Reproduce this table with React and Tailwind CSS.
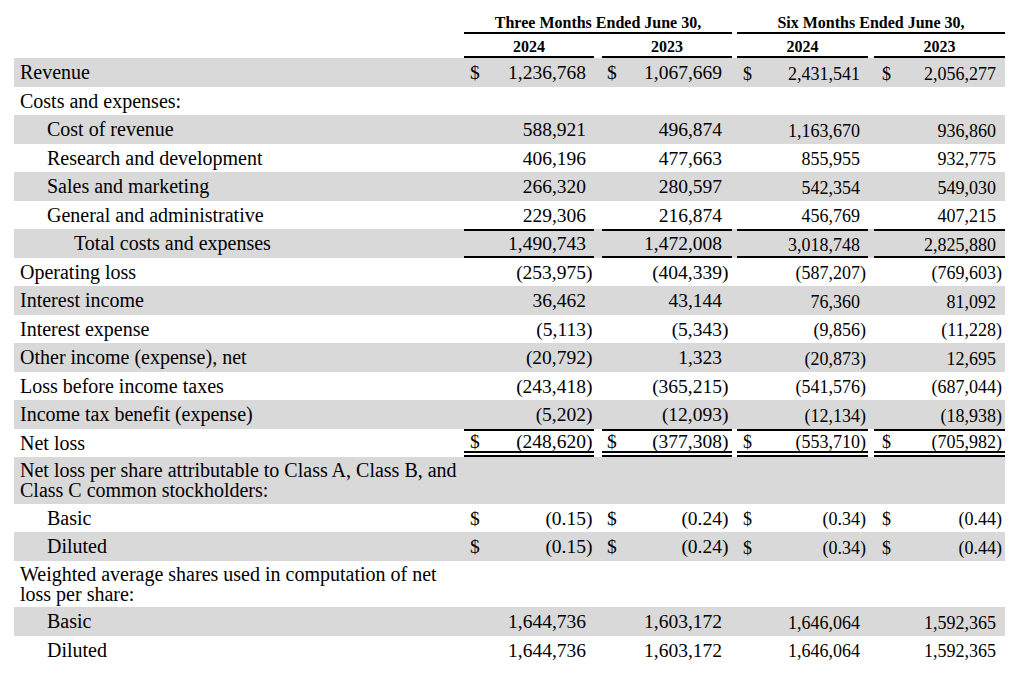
import React from "react";

const COLS = [
  { box: "w-[130px]", dollar: "pl-[6px]", end: "mr-[2px]", six: false },
  { box: "w-[130px] ml-[8px]", dollar: "pl-[5px]", end: "mr-[4px]", six: false },
  { box: "w-[131px] ml-[5px]", dollar: "pl-[6px]", end: "mr-[2px]", six: true },
  { box: "w-[131px] ml-[6px]", dollar: "pl-[8px]", end: "mr-[3px]", six: true },
];

const perShare = ["(0.15)", "(0.24)", "(0.34)", "(0.44)"];
const shares = ["1,644,736", "1,603,172", "1,646,064", "1,592,365"];

const rows = [
  { label: "Revenue", vals: ["1,236,768", "1,067,669", "2,431,541", "2,056,277"], dollar: true },
  { label: "Costs and expenses:" },
  { label: "Cost of revenue", indent: 1, vals: ["588,921", "496,874", "1,163,670", "936,860"] },
  { label: "Research and development", indent: 1, vals: ["406,196", "477,663", "855,955", "932,775"] },
  { label: "Sales and marketing", indent: 1, vals: ["266,320", "280,597", "542,354", "549,030"] },
  { label: "General and administrative", indent: 1, vals: ["229,306", "216,874", "456,769", "407,215"] },
  { label: "Total costs and expenses", indent: 2, vals: ["1,490,743", "1,472,008", "3,018,748", "2,825,880"], rule: "total" },
  { label: "Operating loss", vals: ["(253,975)", "(404,339)", "(587,207)", "(769,603)"] },
  { label: "Interest income", vals: ["36,462", "43,144", "76,360", "81,092"] },
  { label: "Interest expense", vals: ["(5,113)", "(5,343)", "(9,856)", "(11,228)"] },
  { label: "Other income (expense), net", vals: ["(20,792)", "1,323", "(20,873)", "12,695"] },
  { label: "Loss before income taxes", vals: ["(243,418)", "(365,215)", "(541,576)", "(687,044)"] },
  { label: "Income tax benefit (expense)", vals: ["(5,202)", "(12,093)", "(12,134)", "(18,938)"] },
  { label: "Net loss", vals: ["(248,620)", "(377,308)", "(553,710)", "(705,982)"], dollar: true, rule: "net" },
  { label: ["Net loss per share attributable to Class A, Class B, and", "Class C common stockholders:"], tall: true },
  { label: "Basic", indent: 1, vals: perShare, dollar: true },
  { label: "Diluted", indent: 1, vals: perShare, dollar: true },
  { label: ["Weighted average shares used in computation of net", "loss per share:"], tall: true },
  { label: "Basic", indent: 1, vals: shares },
  { label: "Diluted", indent: 1, vals: shares },
];

const indents = ["pl-[6px]", "pl-[33px]", "pl-[60px]"];

const ValueCell = ({ col, value, dollar, rule }) => {
  const c = COLS[col];
  const paren = value && value.startsWith("(");
  const num = paren ? value.slice(0, -1) : value;
  const ruleCls =
    rule === "total"
      ? "border-y-2 border-black"
      : rule === "net"
      ? "border-t-2 border-b-[6px] border-black [border-bottom-style:double]"
      : "";
  return (
    <div
      className={`${c.box} shrink-0 h-full flex items-center ${
        c.six ? "text-[18px] pt-[4px]" : "text-[19.5px] pt-[1px]"
      } ${ruleCls}`}
    >
      <span className={`${c.dollar} w-[22px] shrink-0`}>{dollar ? "$" : ""}</span>
      <span className="flex-1 text-right whitespace-nowrap">{num}</span>
      <span className={`w-[6px] shrink-0 ${c.end}`}>{paren ? ")" : ""}</span>
    </div>
  );
};

const App = () => {
  return (
    <div className="w-[1023px] h-[682px] bg-white text-black font-['Liberation_Serif',serif] pl-[14px] overflow-hidden">
      {/* column heads */}
      <div className="flex h-[34px] text-[16px] font-bold leading-[18px]">
        <div className="w-[450px] shrink-0" />
        <div className="w-[268px] shrink-0 border-b-2 border-black flex items-end justify-center">
          Three Months Ended June 30,
        </div>
        <div className="w-[268px] ml-[5px] shrink-0 border-b-2 border-black flex items-end justify-center">
          Six Months Ended June 30,
        </div>
      </div>
      <div className="flex h-[24px] text-[16px] font-bold leading-[18px]">
        <div className="w-[450px] shrink-0" />
        {["2024", "2023", "2024", "2023"].map((y, i) => (
          <div
            key={i}
            className={`${COLS[i].box} shrink-0 border-b-2 border-black flex items-end justify-center`}
          >
            {y}
          </div>
        ))}
      </div>

      {/* body */}
      {rows.map((r, idx) => (
        <div
          key={idx}
          className={`flex w-[991px] ${r.tall ? "h-[46.5px]" : "h-[28.5px]"} ${
            idx % 2 === 0 ? "bg-[#d9d9d9]" : "bg-white"
          }`}
        >
          <div
            className={`w-[450px] shrink-0 h-full flex items-center text-[20px] leading-[20px] whitespace-nowrap ${
              indents[r.indent || 0]
            }`}
          >
            {Array.isArray(r.label) ? (
              <span>
                {r.label[0]}
                <br />
                {r.label[1]}
              </span>
            ) : (
              r.label
            )}
          </div>
          {r.vals &&
            r.vals.map((v, i) => (
              <ValueCell key={i} col={i} value={v} dollar={r.dollar} rule={r.rule} />
            ))}
        </div>
      ))}
    </div>
  );
};

export default App;
